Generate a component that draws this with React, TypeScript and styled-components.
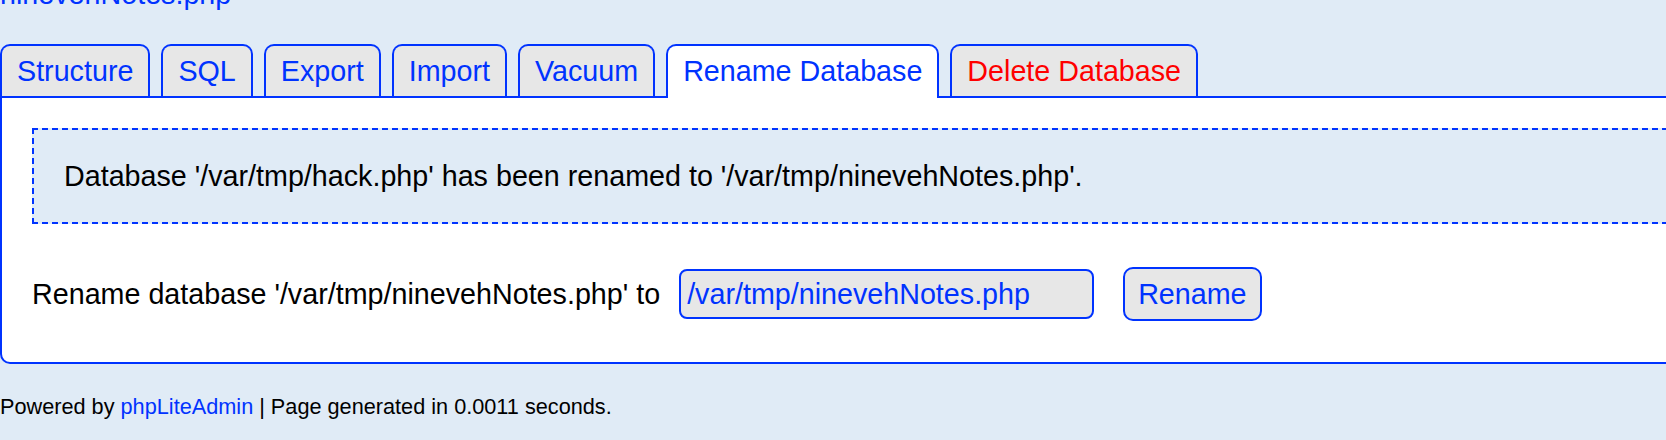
import React from "react";
import styled, { createGlobalStyle } from "styled-components";

const Global = createGlobalStyle`
  html, body {
    margin: 0;
    padding: 0;
    overflow: hidden;
    background: #e0ebf6;
  }
  body {
    font-family: "Liberation Sans", Arial, Helvetica, sans-serif;
    color: #000;
  }
  * { box-sizing: border-box; }
`;

const Page = styled.div`
  width: 1800px;
`;

const Header = styled.div`
  margin-top: -22px;
  height: 32px;
  margin-bottom: 34px;
  font-size: 28.7px;
  line-height: 32px;
`;

const Link = styled.a`
  color: #0033ff;
  text-decoration: none;
`;

const Tabs = styled.div`
  display: flex;
  align-items: flex-end;
  position: relative;
  z-index: 1;
`;

const Tab = styled.a<{ $active?: boolean; $danger?: boolean }>`
  display: block;
  margin-right: 11px;
  padding: 9px 15px ${(p) => (p.$active ? "11px" : "9px")};
  margin-bottom: ${(p) => (p.$active ? "-2px" : "0")};
  border: 2px solid #0033ff;
  border-bottom: none;
  border-radius: 10px 10px 0 0;
  background: ${(p) => (p.$active ? "#ffffff" : "#e7e7e7")};
  color: ${(p) => (p.$danger ? "#ff0000" : "#0033ff")};
  font-size: 28.7px;
  line-height: 32px;
  text-decoration: none;
  white-space: nowrap;
`;

const Panel = styled.div`
  border: 2px solid #0033ff;
  border-radius: 0 0 10px 10px;
  background: #ffffff;
  padding: 30px;
`;

const Confirm = styled.div`
  border: 2px dashed #0033ff;
  background: #e0ebf6;
  padding: 30px;
  font-size: 28.7px;
  line-height: 32px;
`;

const RenameRow = styled.form`
  display: flex;
  align-items: center;
  height: 54px;
  margin: 43px 0 11px;
  font-size: 28.7px;
  line-height: 32px;
`;

const Label = styled.span`
  white-space: nowrap;
`;

const TextInput = styled.input`
  width: 415px;
  height: 50px;
  margin-left: 19px;
  padding: 0 6px;
  border: 2px solid #0033ff;
  border-radius: 8px;
  background: #e7e7e7;
  color: #0033ff;
  font-family: "Liberation Sans", Arial, sans-serif;
  font-size: 28.7px;
  outline: none;
`;

const Button = styled.button`
  height: 54px;
  margin-left: 29px;
  padding: 0 13px;
  border: 2px solid #0033ff;
  border-radius: 10px;
  background: #e7e7e7;
  color: #0033ff;
  font-family: "Liberation Sans", Arial, sans-serif;
  font-size: 28.7px;
  line-height: 32px;
  cursor: pointer;
`;

const Footer = styled.div`
  margin-top: 30px;
  font-size: 21.7px;
  line-height: 25px;
  white-space: nowrap;
`;

const tabs = [
  { label: "Structure" },
  { label: "SQL" },
  { label: "Export" },
  { label: "Import" },
  { label: "Vacuum" },
  { label: "Rename Database", active: true },
  { label: "Delete Database", danger: true },
];

export default function App() {
  return (
    <>
      <Global />
      <Page>
        <Header>
          <Link href="#">ninevehNotes.php</Link>
        </Header>
        <Tabs>
          {tabs.map((t) => (
            <Tab key={t.label} href="#" $active={t.active} $danger={t.danger}>
              {t.label}
            </Tab>
          ))}
        </Tabs>
        <Panel>
          <Confirm>
            Database '/var/tmp/hack.php' has been renamed to '/var/tmp/ninevehNotes.php'.
          </Confirm>
          <RenameRow onSubmit={(e) => e.preventDefault()}>
            <Label>Rename database '/var/tmp/ninevehNotes.php' to</Label>
            <TextInput defaultValue="/var/tmp/ninevehNotes.php" />
            <Button type="submit">Rename</Button>
          </RenameRow>
        </Panel>
        <Footer>
          Powered by <Link href="#">phpLiteAdmin</Link> | Page generated in 0.0011 seconds.
        </Footer>
      </Page>
    </>
  );
}
